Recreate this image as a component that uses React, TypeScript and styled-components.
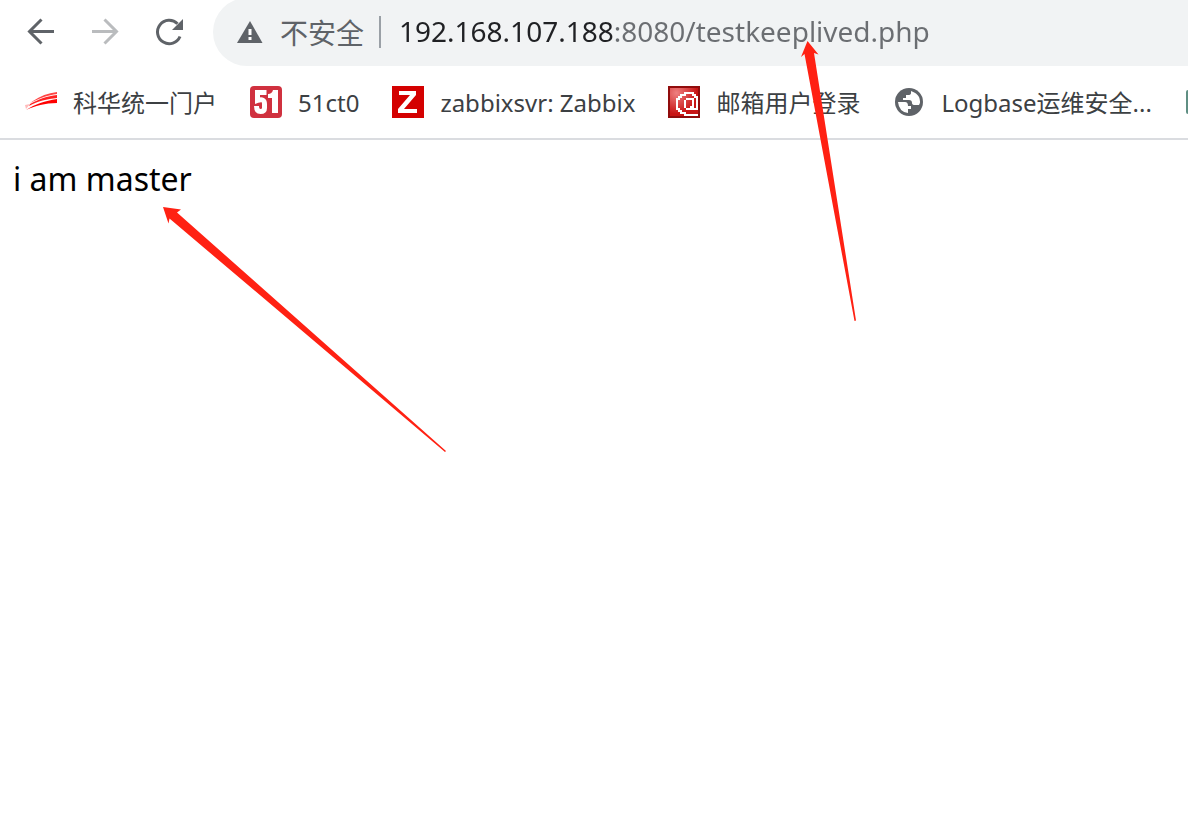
import React from "react";
import styled, { createGlobalStyle } from "styled-components";

const GlobalStyle = createGlobalStyle`
  *, *::before, *::after { box-sizing: border-box; }
  body {
    margin: 0;
    background: #fff;
    font-family: "Noto Sans", "Noto Sans CJK SC", sans-serif;
  }
`;

const Browser = styled.div`
  position: relative;
  min-height: 100vh;
  overflow: hidden;
`;

const Toolbar = styled.header`
  display: flex;
  align-items: center;
  height: 66px;
`;

const NavButtons = styled.nav`
  display: flex;
  flex: none;
  gap: 24px;
  padding: 0 24px 4px 21px;
`;

const NavButton = styled.button`
  width: 40px;
  height: 40px;
  padding: 0;
  border: 0;
  background: none;
  color: #5f6368;

  &:disabled { color: #babcbe; }
  svg { display: block; }
`;

const AddressBar = styled.div`
  display: flex;
  flex: 1;
  align-items: center;
  min-width: 0;
  height: 68px;
  margin: -2px 0 0;
  padding: 0 0 0 24px;
  border-radius: 34px 0 0 34px;
  background: #f1f3f4;
`;

const Security = styled.button`
  display: flex;
  flex: none;
  align-items: center;
  gap: 17px;
  height: 32px;
  padding: 0 15px 0 0;
  border: 0;
  border-right: 2px solid #9aa0a6;
  background: none;
  color: #5f6368;
  font: 28px/32px "Noto Sans CJK SC", sans-serif;
  white-space: nowrap;
`;

const UrlInput = styled.input`
  flex: 1;
  min-width: 0;
  height: 48px;
  margin: 0 0 2px 18px;
  padding: 0;
  border: 0;
  outline: 0;
  background: linear-gradient(90deg, #202124 214px, #6b6e72 214px);
  background-clip: text;
  -webkit-background-clip: text;
  color: transparent;
  font: 28px/48px "Noto Sans", sans-serif;
`;

const BookmarksBar = styled.nav`
  display: flex;
  align-items: center;
  gap: 33px;
  height: 74px;
  padding: 0 0 0 25px;
  border-bottom: 2px solid #dadce0;
  overflow: hidden;
`;

const Bookmark = styled.a`
  display: flex;
  flex: none;
  align-items: center;
  gap: 16px;
  color: #3c4043;
  font-size: 24px;
  line-height: 36px;
  text-decoration: none;
  white-space: nowrap;

  svg { display: block; flex: none; }
`;

const BookmarkLabel = styled.span`
  padding-top: 2px;
`;

const Page = styled.main`
  padding: 17px 13px;
  color: #000;
  font-size: 32px;
  line-height: 44px;
`;

const Annotations = styled.svg`
  position: absolute;
  top: 0;
  left: 0;
  pointer-events: none;
`;

const BackIcon = () => (
  <svg width="40" height="40" viewBox="0 0 40 40" fill="none" stroke="currentColor" strokeWidth="3">
    <path d="M33 20.5H9M20.5 8.5L8.5 20.5L20.5 32.5" />
  </svg>
);

const ForwardIcon = () => (
  <svg width="40" height="40" viewBox="0 0 40 40" fill="none" stroke="currentColor" strokeWidth="3">
    <path d="M7 20.5H31M19.5 8.5L31.5 20.5L19.5 32.5" />
  </svg>
);

const ReloadIcon = () => (
  <svg width="40" height="40" viewBox="0 0 40 40">
    <path d="M31 25.5A11.7 11.7 0 1 1 28.5 12.7" fill="none" stroke="currentColor" strokeWidth="3" />
    <path d="M34 8V19H23Z" fill="currentColor" />
  </svg>
);

const WarningIcon = () => (
  <svg width="26" height="24" viewBox="0 0 26 24">
    <path d="M13 1L25.5 23H0Z" fill="#5f6368" />
    <path d="M11.5 9h3v6h-3zM11.5 17h3v3h-3z" fill="#fff" />
  </svg>
);

const KehuaIcon = () => (
  <svg width="32" height="32" viewBox="0 0 32 32">
    <path d="M8 15C15 10 23 7 32 6V8C23 9 15 12 5 17Z" fill="#f44" />
    <path d="M5 18C14 13 22 10 32 9V12C22 13 13 15 4 20Z" fill="#f22" />
    <path d="M0 19L5 18L1 23Z" fill="#fbb" />
    <path d="M1 24C10 18 20 15 32 13V17C20 17 10 20 1 24Z" fill="#f00" />
  </svg>
);

const FiftyOneIcon = () => (
  <svg width="32" height="32" viewBox="0 0 32 32">
    <rect width="32" height="32" rx="4" fill="#d0313f" />
    <path d="M16.5 6.5H7.5V14.5Q14.5 12 14.5 18V22Q14.5 25.5 10.5 25.5Q6.5 25.5 6.5 20" fill="none" stroke="#fff" strokeWidth="5" />
    <path d="M23 4H28V27H22V12H18V8Q22 8 23 4Z" fill="#fff" />
  </svg>
);

const ZabbixIcon = () => (
  <svg width="32" height="32" viewBox="0 0 32 32">
    <rect width="32" height="32" fill="#d40000" />
    <path d="M7 5H24V9L12 23H25V27H6V23L18 9H7Z" fill="#fff" />
  </svg>
);

const MailIcon = () => (
  <svg width="32" height="32" viewBox="0 0 32 32" shapeRendering="crispEdges">
    <defs>
      <radialGradient id="mail-shine" cx="0.25" cy="0.2" r="0.7">
        <stop offset="0" stopColor="#ee8080" />
        <stop offset="1" stopColor="#c81414" />
      </radialGradient>
    </defs>
    <rect x="1" y="1" width="30" height="30" fill="url(#mail-shine)" stroke="#900c0c" strokeWidth="2" />
    <path
      d="M30 30H16V28H12V26H10V24H8V12H10V10H12V8H16V6H26V8H28V10H30V24H18V22H16V14H18V12H26V22H28V12H26V10H24V8H18V10H14V12H12V14H10V22H12V24H14V26H18V28H30ZM18 14V22H22V20H24V14Z"
      fill="#fff"
      fillRule="evenodd"
    />
  </svg>
);

const GlobeIcon = () => (
  <svg width="32" height="32" viewBox="0 0 32 32">
    <circle cx="16" cy="16" r="14" fill="#5f6368" />
    <path d="M5 16H12Q15 16 15 20H18V23H15V27Q6 26 5 16Z" fill="#fff" />
    <path d="M18 5V7Q18 9 15 9H13V12H10V14H16Q19 14 19 17Q19 19 22 19H26Q28 16 26 11Q24 7 18 5Z" fill="#fff" />
  </svg>
);

const GreenIcon = () => (
  <svg width="32" height="32" viewBox="0 0 32 32">
    <rect x="1" y="4" width="31" height="24" rx="2" fill="#5f8f83" />
  </svg>
);

const bookmarks = [
  { label: "科华统一门户", Icon: KehuaIcon },
  { label: "51ct0", Icon: FiftyOneIcon },
  { label: "zabbixsvr: Zabbix", Icon: ZabbixIcon },
  { label: "邮箱用户登录", Icon: MailIcon },
  { label: "Logbase运维安全...", Icon: GlobeIcon },
];

export default function App() {
  return (
    <Browser>
      <GlobalStyle />
      <Toolbar>
        <NavButtons aria-label="Navigation">
          <NavButton aria-label="Back"><BackIcon /></NavButton>
          <NavButton aria-label="Forward" disabled><ForwardIcon /></NavButton>
          <NavButton aria-label="Reload"><ReloadIcon /></NavButton>
        </NavButtons>
        <AddressBar>
          <Security><WarningIcon />不安全</Security>
          <UrlInput aria-label="Address" defaultValue="192.168.107.188:8080/testkeeplived.php" spellCheck={false} />
        </AddressBar>
      </Toolbar>
      <BookmarksBar aria-label="Bookmarks">
        {bookmarks.map(({ label, Icon }) => (
          <Bookmark href="#" key={label}>
            <Icon />
            <BookmarkLabel>{label}</BookmarkLabel>
          </Bookmark>
        ))}
        <Bookmark href="#" aria-label="Bookmark"><GreenIcon /></Bookmark>
      </BookmarksBar>
      <Page>i am master</Page>
      <Annotations width="1188" height="830" viewBox="0 0 1188 830" fill="#ff2113" aria-hidden="true">
        <path d="M163 207L181 209.5L177 212.5L446 451L445 452L169.5 218.5L168.5 223.5Z" />
        <path d="M807.5 41L818.5 54.5L814 53L856 320.5L854.5 321L804.5 54L801 57Z" />
      </Annotations>
    </Browser>
  );
}
